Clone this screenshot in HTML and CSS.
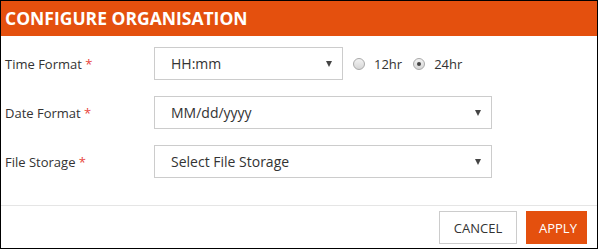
FILE: index.html
```html
<!DOCTYPE html>
<html lang="en">
<head>
    <meta charset="UTF-8">
    <title>Configure Organisation</title>
    <link rel="stylesheet" href="styles.css">
</head>
<body>
    <div class="dialog">
        <div class="dialog-header">CONFIGURE ORGANISATION</div>

        <div class="dialog-body">
            <div class="form-row">
                <label class="form-label">Time Format <span class="req">*</span></label>
                <div class="select select-short">HH:mm</div>
                <div class="radio-group">
                    <label class="radio"><span class="radio-dot"></span>12hr</label>
                    <label class="radio"><span class="radio-dot checked"></span>24hr</label>
                </div>
            </div>
            <div class="form-row">
                <label class="form-label">Date Format <span class="req">*</span></label>
                <div class="select">MM/dd/yyyy</div>
            </div>
            <div class="form-row">
                <label class="form-label">File Storage <span class="req">*</span></label>
                <div class="select">Select File Storage</div>
            </div>
        </div>

        <div class="dialog-footer">
            <button class="btn btn-default">CANCEL</button>
            <button class="btn btn-primary">APPLY</button>
        </div>
    </div>
</body>
</html>
```
FILE: styles.css
```css
* {
    margin: 0;
    padding: 0;
    box-sizing: border-box;
}

body {
    font-family: 'Open Sans', 'Liberation Sans', sans-serif;
    background: #fff;
    color: #333;
}

.dialog {
    width: 598px;
    height: 249px;
    border: 1px solid #000;
    display: flex;
    flex-direction: column;
}

.dialog-header {
    background: #e4500e;
    color: #fff;
    font-weight: bold;
    font-size: 17.5px;
    height: 35px;
    line-height: 35px;
    padding-left: 4px;
}

.dialog-body {
    flex: 1;
    padding: 11px 0 0 4px;
}

.form-row {
    display: flex;
    align-items: center;
    height: 33px;
    margin-bottom: 16px;
}

.form-label {
    width: 149px;
    font-size: 13px;
    color: #333;
}

.req {
    color: #e8453c;
}

.select {
    width: 338px;
    height: 33px;
    border: 1px solid #ccc;
    display: flex;
    align-items: center;
    justify-content: space-between;
    padding: 0 10px 0 16px;
    font-size: 14px;
    color: #333;
}

.select::after {
    content: '';
    border-left: 3.5px solid transparent;
    border-right: 3.5px solid transparent;
    border-top: 6px solid #444;
}

.select-short {
    width: 189px;
}

.radio-group {
    display: flex;
    gap: 11px;
    margin-left: 10px;
}

.radio {
    display: flex;
    align-items: center;
    gap: 9px;
    font-size: 13px;
    color: #333;
}

.radio-dot {
    width: 12px;
    height: 12px;
    border-radius: 50%;
    border: 1px solid #a9a9a9;
    background: linear-gradient(180deg, #f2f2f2 0%, #d6d6d6 100%);
    display: flex;
    align-items: center;
    justify-content: center;
}

.radio-dot.checked::after {
    content: '';
    width: 4px;
    height: 4px;
    border-radius: 50%;
    background: #444;
}

.dialog-footer {
    border-top: 1px solid #e5e5e5;
    display: flex;
    justify-content: flex-end;
    gap: 9px;
    padding: 5px 10px 4px 0;
}

.btn {
    font-family: inherit;
    font-size: 13px;
    height: 33px;
    padding: 0 12px;
    cursor: pointer;
}

.btn-default {
    width: 78px;
    background: #fff;
    color: #333;
    border: 1px solid #ccc;
}

.btn-primary {
    width: 61px;
    background: #e4500e;
    color: #fff;
    border: 1px solid #e4500e;
}
```
